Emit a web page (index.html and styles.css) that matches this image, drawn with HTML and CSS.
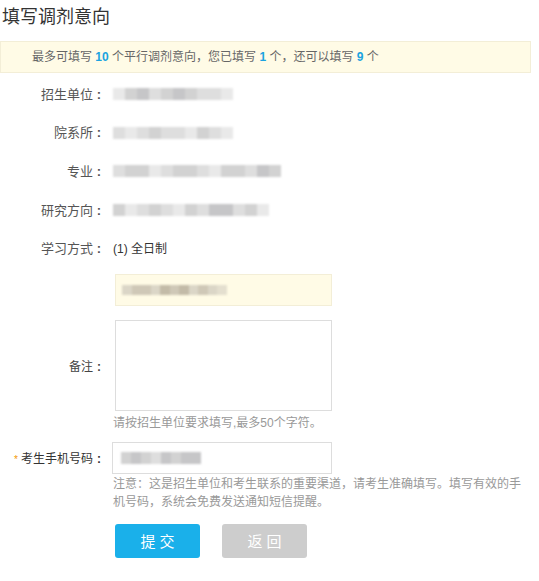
FILE: index.html
```html
<!DOCTYPE html>
<html lang="zh">
<head>
<meta charset="utf-8">
<link rel="stylesheet" href="styles.css">
</head>
<body>
<h1 class="title">填写调剂意向</h1>
<div class="notice">最多可填写 <b>10</b> 个平行调剂意向，您已填写 <b>1</b> 个，还可以填写 <b>9</b> 个</div>
<div class="form">
  <div class="row">
    <div class="label">招生单位<span class="colon">:</span></div>
    <div class="value"><span class="mosaic"><i class="g4"></i><i class="g2"></i><i class="g3"></i><i class="g1"></i><i class="g2"></i><i class="g3"></i><i class="g2"></i><i class="g1"></i><i class="g1"></i><i class="g4"></i></span></div>
  </div>
  <div class="row">
    <div class="label">院系所<span class="colon">:</span></div>
    <div class="value"><span class="mosaic"><i class="g1"></i><i class="g4"></i><i class="g1"></i><i class="g2"></i><i class="g1"></i><i class="g1"></i><i class="g4"></i><i class="g2"></i><i class="g1"></i><i class="g4"></i></span></div>
  </div>
  <div class="row">
    <div class="label">专业<span class="colon">:</span></div>
    <div class="value"><span class="mosaic"><i class="g1"></i><i class="g2"></i><i class="g2"></i><i class="g4"></i><i class="g1"></i><i class="g2"></i><i class="g2"></i><i class="g1"></i><i class="g4"></i><i class="g2"></i><i class="g2"></i><i class="g1"></i><i class="g3"></i><i class="g2"></i></span></div>
  </div>
  <div class="row">
    <div class="label">研究方向<span class="colon">:</span></div>
    <div class="value"><span class="mosaic"><i class="g2"></i><i class="g4"></i><i class="g1"></i><i class="g2"></i><i class="g1"></i><i class="g4"></i><i class="g2"></i><i class="g1"></i><i class="g3"></i><i class="g3"></i><i class="g1"></i><i class="g2"></i><i class="g4"></i></span></div>
  </div>
  <div class="row">
    <div class="label">学习方式<span class="colon">:</span></div>
    <div class="value dark">(1) 全日制</div>
  </div>
  <div class="row-box">
    <div class="label"></div>
    <div class="yellow-box"><span class="mosaic warm"><i class="y1"></i><i class="y2"></i><i class="y2"></i><i class="y1"></i><i class="y3"></i><i class="y2"></i><i class="y3"></i><i class="y1"></i><i class="y2"></i><i class="y1"></i><i class="y4"></i></span></div>
  </div>
  <div class="row-area">
    <div class="label">备注<span class="colon">:</span></div>
    <div class="area"></div>
  </div>
  <div class="hint">请按招生单位要求填写,最多50个字符。</div>
  <div class="row-phone">
    <div class="label"><span class="star">*</span>考生手机号码<span class="colon">:</span></div>
    <div class="input"><span class="mosaic small"><i class="g2"></i><i class="g3"></i><i class="g2"></i><i class="g1"></i><i class="g3"></i><i class="g2"></i><i class="g3"></i><i class="g3"></i></span></div>
  </div>
  <div class="note">注意：这是招生单位和考生联系的重要渠道，请考生准确填写。填写有效的手机号码，系统会免费发送通知短信提醒。</div>
  <div class="buttons">
    <button class="btn submit">提交</button>
    <button class="btn back">返回</button>
  </div>
</div>
</body>
</html>
```
FILE: styles.css
```css
* { box-sizing: border-box; }
body {
  margin: 0;
  font-family: "Liberation Sans", "Noto Sans CJK SC", sans-serif;
  color: #333;
  background: #fff;
  width: 539px;
}
.title {
  margin: 0;
  padding: 6px 0 0 2px;
  height: 41px;
  font-size: 18px;
  font-weight: normal;
  line-height: 22px;
  color: #333;
}
.notice {
  width: 531px;
  height: 32px;
  background: #fffbe6;
  border: 1px solid #f3eed7;
  padding-left: 31px;
  font-size: 12px;
  line-height: 30px;
  color: #666;
}
.notice b { color: #1ba3e0; font-weight: bold; }
.form { padding-top: 1px; }
.label {
  width: 105px;
  flex: none;
  text-align: right;
  font-size: 13px;
  color: #555;
  white-space: nowrap;
}
.colon {
  display: inline-block;
  width: 12px;
  text-align: center;
  font-weight: bold;
}
.row {
  display: flex;
  align-items: center;
  height: 38.6px;
}
.value { padding-left: 8px; font-size: 12px; }
.value.dark { color: #333; }
.mosaic {
  display: inline-flex;
  height: 12px;
  filter: blur(0.8px);
  vertical-align: middle;
}
.mosaic i {
  display: block;
  width: 12px;
  height: 12px;
}
.mosaic.warm, .mosaic.warm i { height: 10px; }
.mosaic.warm i { width: 9.5px; }
.mosaic.small i { width: 10px; }
.g1 { background: #dedede; }
.g2 { background: #d2d2d2; }
.g3 { background: #c6c6c8; }
.g4 { background: #e9e9e9; }
.y1 { background: #dbd6c7; }
.y2 { background: #cfc8b7; }
.y3 { background: #c3bba8; }
.y4 { background: #e4dfcf; }
.row-box {
  display: flex;
  margin-top: 7px;
}
.yellow-box {
  margin-left: 10px;
  width: 217px;
  height: 32px;
  background: #fffbe6;
  border: 1px solid #f3eed7;
  padding-left: 6px;
  display: flex;
  align-items: center;
}
.row-area {
  display: flex;
  align-items: center;
  margin-top: 14px;
}
.row-area .label { font-size: 12px; color: #444; }
.area {
  margin-left: 10px;
  width: 217px;
  height: 91px;
  border: 1px solid #ddd;
}
.hint {
  padding-left: 113px;
  margin-top: 4px;
  font-size: 12px;
  line-height: 16px;
  color: #999;
}
.row-phone {
  display: flex;
  align-items: center;
  margin-top: 11px;
}
.row-phone .label { font-size: 12px; color: #333; }
.star { color: #f39800; margin-right: 3px; font-size: 10px; }
.input {
  margin-left: 7px;
  width: 220px;
  height: 32px;
  border: 1px solid #ddd;
  padding-left: 8px;
  display: flex;
  align-items: center;
}
.note {
  padding-left: 113px;
  padding-right: 10px;
  margin-top: 1px;
  font-size: 12px;
  line-height: 18px;
  color: #999;
}
.buttons {
  display: flex;
  gap: 22px;
  padding-left: 115px;
  margin-top: 13px;
}
.btn {
  width: 85px;
  height: 34px;
  border: none;
  border-radius: 3px;
  color: #fff;
  font-family: "Liberation Sans", "Noto Sans CJK SC", sans-serif;
  font-size: 15px;
  letter-spacing: 4px;
  padding: 0 0 0 4px;
}
.submit { background: #1ab0ea; }
.back { background: #cdcdcd; }
```
